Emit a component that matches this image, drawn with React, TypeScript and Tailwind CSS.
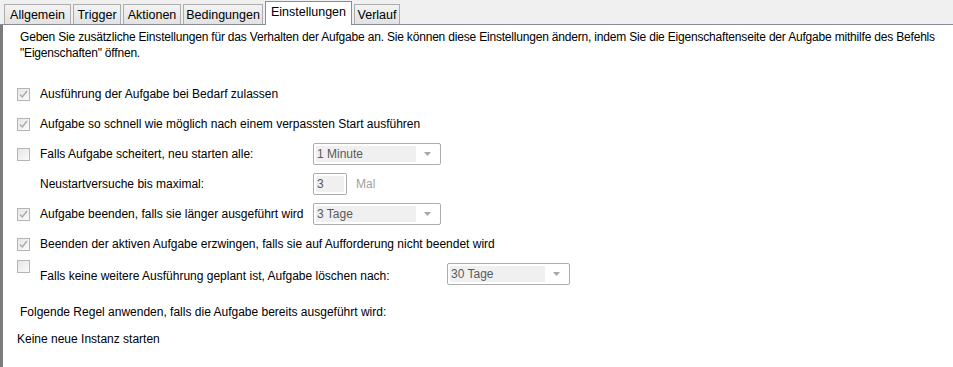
import React from "react";

const font = { fontFamily: '"Liberation Sans", Arial, sans-serif' };

function Check({ checked }: { checked: boolean }) {
  return (
    <div className="w-[13px] h-[13px] border border-[#b4b4b4] bg-gradient-to-br from-[#e6e6e6] to-[#fbfbfb] flex items-center justify-center shrink-0">
      {checked && (
        <svg width="9" height="9" viewBox="0 0 9 9">
          <path d="M1 4.5 L3.3 7 L8 1" fill="none" stroke="#a9a9a9" strokeWidth="1.4" />
        </svg>
      )}
    </div>
  );
}

function Drop({ value, w }: { value: string; w: string }) {
  return (
    <div className={`${w} h-[22px] border border-[#adadad] rounded-[2px] bg-white flex items-center p-[2px]`}>
      <div className="flex-1 h-full bg-[#f0f0f0] text-[#5a5a5a] text-[12px] leading-[16px] flex items-center pl-[1px]">{value}</div>
      <div className="w-[22px] h-full flex items-center justify-center">
        <svg width="7" height="4" viewBox="0 0 7 4">
          <path d="M0 0 H7 L3.5 4 Z" fill="#a6a6a6" />
        </svg>
      </div>
    </div>
  );
}

const tabs = [
  { t: "Allgemein", w: "w-[67px]" },
  { t: "Trigger", w: "w-[48px]" },
  { t: "Aktionen", w: "w-[58px]" },
  { t: "Bedingungen", w: "w-[80px]" },
  { t: "Einstellungen", w: "w-[87px]", sel: true },
  { t: "Verlauf", w: "w-[46px]" },
];

export default function App() {
  return (
    <div className="w-[953px] h-[367px] bg-white overflow-hidden text-[12px] text-[#000]" style={font}>
      <div className="h-[25px] bg-[#f0f0f0] flex items-end pl-[4px] gap-[2px] border-b border-[#898c95] relative">
        {tabs.map((x) =>
          x.sel ? (
            <div
              key={x.t}
              className={`${x.w} h-[24px] -mb-[1px] bg-white border border-b-0 border-[#898c95] flex items-center justify-center text-[12.5px] leading-[16px] pb-[3px]`}
            >
              {x.t}
            </div>
          ) : (
            <div
              key={x.t}
              className={`${x.w} h-[20px] bg-gradient-to-b from-[#f3f3f3] to-[#e2e2e2] border border-b-0 border-[#acacac] flex items-center justify-center text-[12.5px] leading-[16px]`}
            >
              {x.t}
            </div>
          )
        )}
      </div>
      <div className="h-[342px] border-l-[3px] border-[#7b7b7b] pl-[17px] pt-[4px]">
        <div className="leading-[16px] text-[12px] whitespace-nowrap tracking-[-0.19px]">
          Geben Sie zusätzliche Einstellungen für das Verhalten der Aufgabe an. Sie können diese Einstellungen ändern, indem Sie die Eigenschaftenseite der Aufgabe mithilfe des Befehls
          <br />
          "Eigenschaften" öffnen.
        </div>
        <div className="mt-[18px] -ml-[3px] flex flex-col">
          <div className="h-[30px] flex items-center">
            <Check checked />
            <span className="ml-[10px]">Ausführung der Aufgabe bei Bedarf zulassen</span>
          </div>
          <div className="h-[30px] flex items-center">
            <Check checked />
            <span className="ml-[10px]">Aufgabe so schnell wie möglich nach einem verpassten Start ausführen</span>
          </div>
          <div className="h-[30px] flex items-center">
            <Check checked={false} />
            <span className="ml-[10px] w-[273px]">Falls Aufgabe scheitert, neu starten alle:</span>
            <Drop value="1 Minute" w="w-[128px]" />
          </div>
          <div className="h-[30px] flex items-center">
            <span className="ml-[23px] w-[273px]">Neustartversuche bis maximal:</span>
            <div className="w-[34px] h-[22px] border border-[#adadad] rounded-[2px] p-[2px] bg-white">
              <div className="h-full bg-[#f0f0f0] text-[#5a5a5a] leading-[16px] pl-[1px]">3</div>
            </div>
            <span className="ml-[9px] text-[#a0a0a0]">Mal</span>
          </div>
          <div className="h-[30px] flex items-center">
            <Check checked />
            <span className="ml-[10px] w-[273px]">Aufgabe beenden, falls sie länger ausgeführt wird</span>
            <Drop value="3 Tage" w="w-[128px]" />
          </div>
          <div className="h-[30px] flex items-center">
            <Check checked />
            <span className="ml-[10px]">Beenden der aktiven Aufgabe erzwingen, falls sie auf Aufforderung nicht beendet wird</span>
          </div>
          <div className="h-[30px] flex items-start pt-[1px]">
            <Check checked={false} />
            <span className="ml-[10px] w-[407px] mt-[7px]">Falls keine weitere Ausführung geplant ist, Aufgabe löschen nach:</span>
            <div className="mt-[3px]">
              <Drop value="30 Tage" w="w-[123px]" />
            </div>
          </div>
        </div>
        <div className="mt-[15px] leading-[16px]">Folgende Regel anwenden, falls die Aufgabe bereits ausgeführt wird:</div>
        <div className="mt-[11px] -ml-[3px] leading-[16px]">Keine neue Instanz starten</div>
      </div>
    </div>
  );
}
